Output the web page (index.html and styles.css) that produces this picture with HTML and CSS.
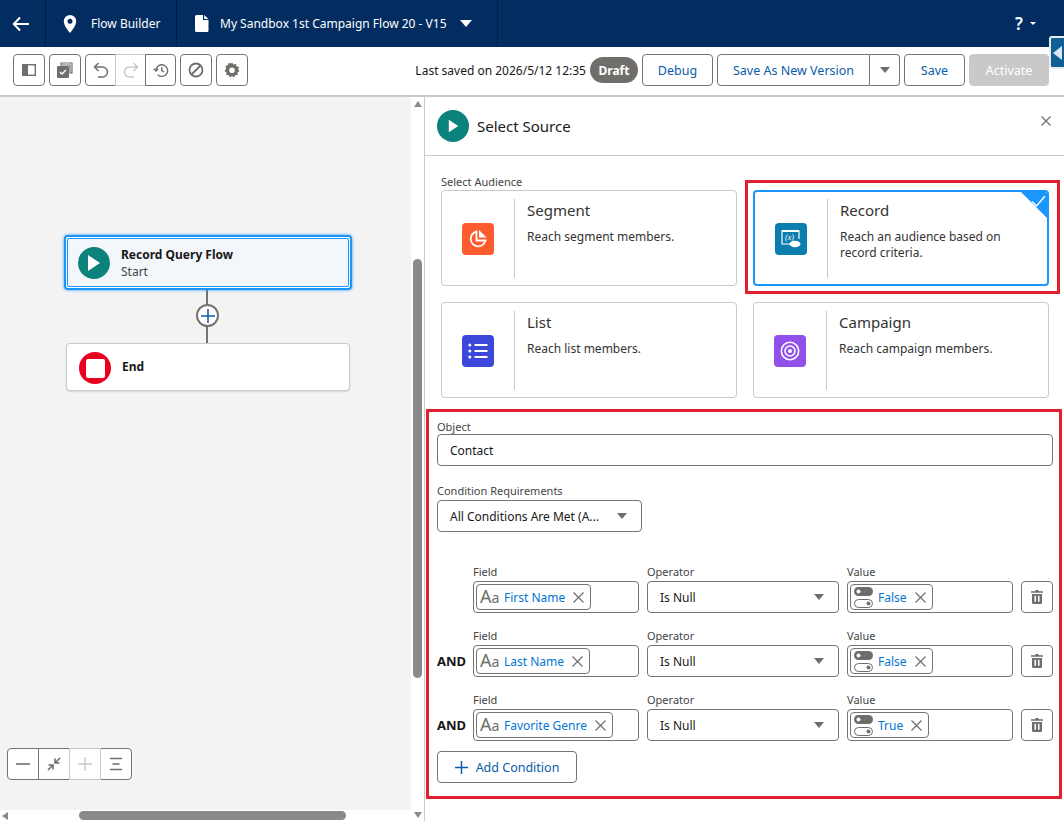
FILE: index.html
```html
<!DOCTYPE html>
<html lang="en">

<head>
  <meta charset="UTF-8" />
  <title>Flow Builder</title>
  <link rel="stylesheet" href="styles.css">
</head>

<body>
  <header class="topbar">
    <div class="top-back">
      <svg width="18" height="18" viewBox="0 0 18 18"><path d="M8 2.5 1.8 9 8 15.500M2 9h15" fill="none" stroke="#fff" stroke-width="2"/></svg>
    </div>
    <div class="top-app">
      <svg width="14" height="18" viewBox="0 0 14 18"><path fill-rule="evenodd" d="M7 0a6.200 6.200 0 0 0-6.200 6.200C.8 10.400 5 15.600 7 18c2-2.400 6.200-7.600 6.200-11.800A6.200 6.200 0 0 0 7 0Zm0 8.700a2.500 2.500 0 1 1 0-5 2.500 2.500 0 0 1 0 5Z" fill="#fff"/></svg>
      <span>Flow Builder</span>
    </div>
    <div class="top-flow">
      <svg width="14" height="17" viewBox="0 0 14 17"><path d="M1.500 0H8v5h5.500v10.500a1.500 1.500 0 0 1-1.500 1.500H1.500A1.500 1.500 0 0 1 0 15.500v-14A1.500 1.500 0 0 1 1.500 0ZM9.200 0l4.300 3.900H9.200Z" fill="#fff"/></svg>
      <span>My Sandbox 1st Campaign Flow 20 - V15</span>
      <i class="caret-white"></i>
    </div>
    <div class="top-help"><b>?</b><i class="caret-small"></i></div>
  </header>

  <div class="side-tab"><i></i></div>

  <section class="toolbar">
    <button class="tool">
      <svg width="14" height="12" viewBox="0 0 14 12"><rect x=".7" y=".7" width="12.600" height="10.600" fill="none" stroke="#706e6b" stroke-width="1.400"/><rect x="1" y="1" width="5" height="10" fill="#706e6b"/></svg>
    </button>
    <button class="tool">
      <svg width="16" height="16" viewBox="0 0 16 16"><path d="M4 3V1h11v10h-2V3Z" fill="none" stroke="#706e6b" stroke-width="1.200"/><rect y="4" width="12" height="12" rx="1" fill="#706e6b"/><path d="m3 10 2 2 4-4" fill="none" stroke="#fff" stroke-width="1.300"/></svg>
    </button>
    <div class="tool-group">
      <button class="tool">
        <svg width="16" height="16" viewBox="0 0 16 16"><path d="M5.500 1 1.500 5l4 4M2 5h7.500a4.500 4.500 0 0 1 0 10H5" fill="none" stroke="#706e6b" stroke-width="1.500"/></svg>
      </button>
      <button class="tool off">
        <svg width="16" height="16" viewBox="0 0 16 16"><path d="m10.500 1 4 4-4 4M14 5H6.500a4.500 4.500 0 0 0 0 10H11" fill="none" stroke="#c9c9c9" stroke-width="1.500"/></svg>
      </button>
      <button class="tool">
        <svg width="16" height="16" viewBox="0 0 16 16"><path d="M3 8.500a5.800 5.800 0 1 1 1.700 4.200M.8 6.800 3 9l2.200-2.200M8.800 5v3.500l2.300 1.500" fill="none" stroke="#706e6b" stroke-width="1.400"/></svg>
      </button>
    </div>
    <button class="tool">
      <svg width="16" height="16" viewBox="0 0 16 16"><circle cx="8" cy="8" r="6.500" fill="none" stroke="#706e6b" stroke-width="1.800"/><path d="m3.500 12.500 9-9" stroke="#706e6b" stroke-width="1.800"/></svg>
    </button>
    <button class="tool">
      <svg width="16" height="16" viewBox="0 0 16 16"><path fill-rule="evenodd" d="M8 .5l1.500 2 2.400-.6.600 2.400 2.500.8-.8 2.400L15.500 9l-2 1.400.2 2.500-2.500.3L10 15.500 8 14l-2 1.500-1.200-2.300-2.500-.3.200-2.500L.5 9l1.700-2.500-.8-2.400 2.500-.8.600-2.400 2.400.6ZM8 5.500a2.800 2.800 0 1 0 0 5.600 2.800 2.800 0 0 0 0-5.600Z" fill="#706e6b"/></svg>
    </button>
    <span class="saved">Last saved on 2026/5/12 12:35</span>
    <span class="draft">Draft</span>
    <button class="btn btn-debug">Debug</button>
    <div class="split">
      <button class="btn split-main">Save As New Version</button>
      <button class="btn split-arrow"><i class="caret-grey"></i></button>
    </div>
    <button class="btn btn-save">Save</button>
    <button class="btn btn-activate">Activate</button>
  </section>

  <main class="work">
    <div class="left">
      <div class="canvas">
        <div class="node node-start">
          <div class="node-inner">
            <span class="round teal">
              <svg width="14" height="18" viewBox="0 0 14 18"><path d="M1 1v16l12-8Z" fill="#fff"/></svg>
            </span>
            <div>
              <div class="node-title">Record Query Flow</div>
              <div class="node-sub">Start</div>
            </div>
          </div>
        </div>
        <div class="connector"></div>
        <div class="add-node">
          <svg width="14" height="14" viewBox="0 0 14 14"><path d="M7 0v14M0 7h14" stroke="#0b5cab" stroke-width="1.500"/></svg>
        </div>
        <div class="node node-end">
          <span class="round red"><i class="stop"></i></span>
          <div class="node-title">End</div>
        </div>
        <div class="zoom-bar">
          <button class="zoom-btn"><svg width="14" height="14" viewBox="0 0 14 14"><path d="M0 7h14" stroke="#706e6b" stroke-width="1.600"/></svg></button>
          <button class="zoom-btn"><svg width="14" height="14" viewBox="0 0 14 14"><path d="M8 6l5-5M8 1.500V6h4.500M6 8l-5 5M1.500 8H6v4.500" fill="none" stroke="#706e6b" stroke-width="1.600"/></svg></button>
          <button class="zoom-btn off"><svg width="14" height="14" viewBox="0 0 14 14"><path d="M7 0v14M0 7h14" stroke="#c9c9c9" stroke-width="1.400"/></svg></button>
          <button class="zoom-btn"><svg width="14" height="14" viewBox="0 0 14 14"><path d="M1 1.500h12M3.500 7h7M1 12.500h12" stroke="#706e6b" stroke-width="1.600"/></svg></button>
        </div>
      </div>
      <div class="hscroll">
        <i class="arrow-left"></i>
        <div class="hthumb"></div>
      </div>
    </div>

    <div class="vscroll">
      <i class="arrow-up"></i>
      <div class="vthumb"></div>
      <i class="arrow-down"></i>
    </div>

    <aside class="panel">
      <div class="panel-head">
        <span class="round teal">
          <svg width="11" height="14" viewBox="0 0 14 18"><path d="M1 1v16l12-8Z" fill="#fff"/></svg>
        </span>
        <h1>Select Source</h1>
        <svg class="panel-close" width="10" height="10" viewBox="0 0 10 10"><path d="M.5.5l9 9M9.500.5l-9 9" stroke="#706e6b" stroke-width="1.200"/></svg>
      </div>

      <div class="audience">
        <div class="field-label">Select Audience</div>
        <div class="cards">
          <div class="card">
            <div class="card-icon"><span class="tile orange">
              <svg width="20" height="20" viewBox="0 0 20 20"><path d="M8.500 2.500a7.500 7.500 0 1 0 9 9h-9Z" fill="none" stroke="#fff" stroke-width="1.800"/><path d="M11 1v7.500h7.500Z" fill="#fff"/></svg>
            </span></div>
            <div class="card-text">
              <div class="card-title">Segment</div>
              <p>Reach segment members.</p>
            </div>
          </div>
          <div class="card selected">
            <div class="card-icon"><span class="tile blue">
              <svg width="22" height="22" viewBox="0 0 22 22"><path d="M10 16H2V3h17v8" fill="none" stroke="#fff" stroke-width="1.200"/><path d="M2 3h17" stroke="#fff" stroke-width="2"/><text x="5" y="12" class="tile-x">(x)</text><ellipse cx="15" cy="16" rx="5.500" ry="3.200" fill="#fff"/></svg>
            </span></div>
            <div class="card-text">
              <div class="card-title">Record</div>
              <p>Reach an audience based on record criteria.</p>
            </div>
            <span class="corner"></span>
            <svg class="corner-check" width="15" height="12" viewBox="0 0 15 12"><path d="M1 6.500 5.500 11 14 1" fill="none" stroke="#fff" stroke-width="1.400"/></svg>
          </div>
          <div class="card">
            <div class="card-icon"><span class="tile indigo">
              <svg width="20" height="20" viewBox="0 0 20 20"><path d="M6.500 4h13M6.500 10h13M6.500 16h13" stroke="#fff" stroke-width="2"/><circle cx="1.800" cy="4" r="1.500" fill="#fff"/><circle cx="1.800" cy="10" r="1.500" fill="#fff"/><circle cx="1.800" cy="16" r="1.500" fill="#fff"/></svg>
            </span></div>
            <div class="card-text">
              <div class="card-title">List</div>
              <p>Reach list members.</p>
            </div>
          </div>
          <div class="card">
            <div class="card-icon"><span class="tile purple">
              <svg width="20" height="20" viewBox="0 0 20 20"><circle cx="10" cy="10" r="8.700" fill="none" stroke="#fff" stroke-width="1.600"/><circle cx="10" cy="10" r="5" fill="none" stroke="#fff" stroke-width="1.600"/><circle cx="10" cy="10" r="2" fill="#fff"/></svg>
            </span></div>
            <div class="card-text">
              <div class="card-title">Campaign</div>
              <p>Reach campaign members.</p>
            </div>
          </div>
        </div>
      </div>

      <div class="criteria">
        <div class="field-label">Object</div>
        <div class="input">Contact</div>
        <div class="field-label req-label">Condition Requirements</div>
        <div class="input select req-select">All Conditions Are Met (A...<i class="caret-grey"></i></div>

        <div class="cond-row">
          <span class="and"></span>
          <div class="col-field">
            <div class="field-label">Field</div>
            <div class="input pill-box">
              <span class="pill"><span class="type-aa">A<small>a</small></span><a>First Name</a><svg class="pill-x" width="11" height="11" viewBox="0 0 11 11"><path d="M.5.5l10 10M10.500.5l-10 10" stroke="#706e6b" stroke-width="1.200"/></svg></span>
            </div>
          </div>
          <div class="col-op">
            <div class="field-label">Operator</div>
            <div class="input select">Is Null<i class="caret-grey"></i></div>
          </div>
          <div class="col-field">
            <div class="field-label">Value</div>
            <div class="input pill-box">
              <span class="pill"><svg class="toggle" width="20" height="23" viewBox="0 0 20 23"><rect y="1" width="19" height="9" rx="4.500" fill="#706e6b"/><circle cx="4.500" cy="5.500" r="2" fill="#fff"/><rect x=".5" y="13.500" width="18" height="8" rx="4" fill="none" stroke="#706e6b"/><circle cx="14.500" cy="17.500" r="2" fill="#706e6b"/></svg><a>False</a><svg class="pill-x" width="11" height="11" viewBox="0 0 11 11"><path d="M.5.5l10 10M10.500.5l-10 10" stroke="#706e6b" stroke-width="1.200"/></svg></span>
            </div>
          </div>
          <button class="trash"><svg width="12" height="14" viewBox="0 0 12 14"><path fill-rule="evenodd" d="M4.500 0h3v1.200H12v1.600H0V1.200h4.500ZM1 4h10v8.500a1.500 1.500 0 0 1-1.500 1.500h-7A1.500 1.500 0 0 1 1 12.500Zm2.500 1.800v6h1.500v-6Zm3.500 0v6h1.500v-6Z" fill="#706e6b"/></svg></button>
        </div>

        <div class="cond-row">
          <span class="and">AND</span>
          <div class="col-field">
            <div class="field-label">Field</div>
            <div class="input pill-box">
              <span class="pill"><span class="type-aa">A<small>a</small></span><a>Last Name</a><svg class="pill-x" width="11" height="11" viewBox="0 0 11 11"><path d="M.5.5l10 10M10.500.5l-10 10" stroke="#706e6b" stroke-width="1.200"/></svg></span>
            </div>
          </div>
          <div class="col-op">
            <div class="field-label">Operator</div>
            <div class="input select">Is Null<i class="caret-grey"></i></div>
          </div>
          <div class="col-field">
            <div class="field-label">Value</div>
            <div class="input pill-box">
              <span class="pill"><svg class="toggle" width="20" height="23" viewBox="0 0 20 23"><rect y="1" width="19" height="9" rx="4.500" fill="#706e6b"/><circle cx="4.500" cy="5.500" r="2" fill="#fff"/><rect x=".5" y="13.500" width="18" height="8" rx="4" fill="none" stroke="#706e6b"/><circle cx="14.500" cy="17.500" r="2" fill="#706e6b"/></svg><a>False</a><svg class="pill-x" width="11" height="11" viewBox="0 0 11 11"><path d="M.5.5l10 10M10.500.5l-10 10" stroke="#706e6b" stroke-width="1.200"/></svg></span>
            </div>
          </div>
          <button class="trash"><svg width="12" height="14" viewBox="0 0 12 14"><path fill-rule="evenodd" d="M4.500 0h3v1.200H12v1.600H0V1.200h4.500ZM1 4h10v8.500a1.500 1.500 0 0 1-1.500 1.500h-7A1.500 1.500 0 0 1 1 12.500Zm2.500 1.800v6h1.500v-6Zm3.500 0v6h1.500v-6Z" fill="#706e6b"/></svg></button>
        </div>

        <div class="cond-row">
          <span class="and">AND</span>
          <div class="col-field">
            <div class="field-label">Field</div>
            <div class="input pill-box">
              <span class="pill"><span class="type-aa">A<small>a</small></span><a>Favorite Genre</a><svg class="pill-x" width="11" height="11" viewBox="0 0 11 11"><path d="M.5.5l10 10M10.500.5l-10 10" stroke="#706e6b" stroke-width="1.200"/></svg></span>
            </div>
          </div>
          <div class="col-op">
            <div class="field-label">Operator</div>
            <div class="input select">Is Null<i class="caret-grey"></i></div>
          </div>
          <div class="col-field">
            <div class="field-label">Value</div>
            <div class="input pill-box">
              <span class="pill"><svg class="toggle" width="20" height="23" viewBox="0 0 20 23"><rect y="1" width="19" height="9" rx="4.500" fill="#706e6b"/><circle cx="4.500" cy="5.500" r="2" fill="#fff"/><rect x=".5" y="13.500" width="18" height="8" rx="4" fill="none" stroke="#706e6b"/><circle cx="14.500" cy="17.500" r="2" fill="#706e6b"/></svg><a>True</a><svg class="pill-x" width="11" height="11" viewBox="0 0 11 11"><path d="M.5.5l10 10M10.500.5l-10 10" stroke="#706e6b" stroke-width="1.200"/></svg></span>
            </div>
          </div>
          <button class="trash"><svg width="12" height="14" viewBox="0 0 12 14"><path fill-rule="evenodd" d="M4.500 0h3v1.200H12v1.600H0V1.200h4.500ZM1 4h10v8.500a1.500 1.500 0 0 1-1.500 1.500h-7A1.500 1.500 0 0 1 1 12.500Zm2.500 1.800v6h1.500v-6Zm3.500 0v6h1.500v-6Z" fill="#706e6b"/></svg></button>
        </div>

        <button class="btn add-cond">
          <svg width="13" height="13" viewBox="0 0 13 13"><path d="M6.500 0v13M0 6.500h13" stroke="#0b5cab" stroke-width="1.500"/></svg>
          Add Condition
        </button>
      </div>

      <div class="mark mark-card"></div>
      <div class="mark mark-form"></div>
    </aside>
  </main>
</body>

</html>
```

FILE: styles.css
```css
* {
  margin: 0;
  padding: 0;
  box-sizing: border-box;
}

html,
body {
  height: 821px;
  overflow: hidden;
}

body {
  font-family: "Noto Sans", "Open Sans", sans-serif;
  font-size: 12px;
  color: #181818;
  background: #fff;
  display: flex;
  flex-direction: column;
  position: relative;
}

button {
  font-family: inherit;
  background: #fff;
  cursor: pointer;
}

/* top bar */
.topbar {
  height: 47px;
  background: #032d60;
  color: #fff;
  display: flex;
  align-items: stretch;
  flex-shrink: 0;
}

.top-back,
.top-app,
.top-flow {
  display: flex;
  align-items: center;
  border-right: 1px solid #021c3d;
}

.top-back {
  width: 46px;
  padding-left: 12px;
}

.top-app {
  width: 131px;
  padding-left: 17px;
  gap: 14px;
}

.top-flow {
  width: 321px;
  padding-left: 18px;
  gap: 11px;
}

.caret-white {
  width: 0;
  height: 0;
  border-left: 6px solid transparent;
  border-right: 6px solid transparent;
  border-top: 7px solid #fff;
  margin-left: 2px;
}

.top-help {
  margin-left: auto;
  width: 49px;
  display: flex;
  align-items: center;
  gap: 7px;
}

.top-help b {
  font-size: 17px;
  font-weight: 600;
}

.caret-small {
  width: 0;
  height: 0;
  border-left: 3px solid transparent;
  border-right: 3px solid transparent;
  border-top: 3px solid #fff;
}

.side-tab {
  position: absolute;
  top: 36px;
  right: 0;
  width: 15px;
  height: 33px;
  background: #0f5f94;
  border: 2px solid #e6ecf2;
  border-right: 0;
  border-radius: 3px 0 0 3px;
  display: flex;
  align-items: center;
  z-index: 3;
}

.side-tab i {
  width: 0;
  height: 0;
  border-top: 7px solid transparent;
  border-bottom: 7px solid transparent;
  border-right: 9px solid #dbe7f0;
  margin-left: 2px;
}

/* toolbar */
.toolbar {
  height: 50px;
  flex-shrink: 0;
  display: flex;
  align-items: center;
  padding: 0 15px 2px 13px;
  gap: 4px;
  border-bottom: 2px solid #c9c9c9;
}

.tool {
  width: 32px;
  height: 32px;
  border: 1px solid #747474;
  border-radius: 4px;
  display: flex;
  align-items: center;
  justify-content: center;
}

.tool-group {
  display: flex;
}

.tool-group .tool {
  width: 31px;
  border-radius: 0;
  margin-left: -1px;
}

.tool-group .tool:first-child {
  margin-left: 0;
  border-radius: 4px 0 0 4px;
}

.tool-group .tool:last-child {
  border-radius: 0 4px 4px 0;
}

.tool.off {
  border-color: #c9c9c9;
  border-right: 0;
  border-left-color: #c9c9c9;
}

.saved {
  margin-left: auto;
  font-size: 12px;
  white-space: nowrap;
}

.draft {
  background: #706e6b;
  color: #fff;
  font-weight: 700;
  font-size: 12px;
  height: 26px;
  width: 48px;
  border-radius: 13px;
  display: flex;
  align-items: center;
  justify-content: center;
  margin-right: 0;
}

.btn {
  height: 32px;
  border: 1px solid #747474;
  border-radius: 4px;
  color: #0b5cab;
  font-size: 12.500px;
}

.btn-debug {
  width: 71px;
}

.split {
  display: flex;
}

.split-main {
  width: 153px;
  border-radius: 4px 0 0 4px;
}

.split-arrow {
  width: 30px;
  border-left: 0;
  border-radius: 0 4px 4px 0;
  display: flex;
  align-items: center;
  justify-content: center;
}

.caret-grey {
  width: 0;
  height: 0;
  border-left: 5px solid transparent;
  border-right: 5px solid transparent;
  border-top: 6px solid #706e6b;
}

.btn-save {
  width: 61px;
}

.btn-activate {
  width: 80px;
  background: #c9c9c9;
  border-color: #c9c9c9;
  color: #fff;
}

/* main area */
.work {
  flex: 1;
  display: flex;
  min-height: 0;
}

.left {
  width: 411px;
  display: flex;
  flex-direction: column;
}

.canvas {
  flex: 1;
  background: #f3f3f3;
  position: relative;
}

.node {
  position: absolute;
  background: #fff;
  border-radius: 4px;
}

.node-start {
  left: 64px;
  top: 138px;
  width: 288px;
  height: 55px;
  border: 2px solid #1b96ff;
  padding: 1px;
  box-shadow: 0 0 3px #1b96ff;
  background: #fff;
}

.node-inner {
  height: 100%;
  background: #f3f6fb;
  border: 1px solid #1b96ff;
  border-radius: 2px;
  display: flex;
  align-items: center;
  padding-left: 10px;
  gap: 11px;
}

.node-end {
  left: 66px;
  top: 246px;
  width: 284px;
  height: 48px;
  border: 1px solid #c9c9c9;
  box-shadow: 0 1px 2px rgba(0, 0, 0, .12);
  display: flex;
  align-items: flex-start;
  padding: 8px 0 0 12px;
  gap: 11px;
}

.node-end .node-title {
  margin-top: 6px;
}

.round {
  width: 32px;
  height: 32px;
  border-radius: 50%;
  display: flex;
  align-items: center;
  justify-content: center;
  flex-shrink: 0;
}

.teal {
  background: #0b827c;
}

.red {
  background: #ea001e;
}

.stop {
  width: 19px;
  height: 19px;
  background: #fff;
  border-radius: 2px;
}

.node-title {
  font-size: 12px;
  font-weight: 700;
  line-height: 17px;
}

.node-sub {
  font-size: 12px;
  color: #444;
  line-height: 17px;
}

.connector {
  position: absolute;
  left: 206px;
  top: 193px;
  width: 2px;
  height: 53px;
  background: #747474;
}

.add-node {
  position: absolute;
  left: 196px;
  top: 207px;
  width: 23px;
  height: 23px;
  border: 2px solid #747474;
  border-radius: 50%;
  background: #fff;
  display: flex;
  align-items: center;
  justify-content: center;
}

.zoom-bar {
  position: absolute;
  left: 7px;
  top: 651px;
  display: flex;
}

.zoom-btn {
  width: 32px;
  height: 32px;
  margin-left: -1px;
  border: 1px solid #747474;
  display: flex;
  align-items: center;
  justify-content: center;
}

.zoom-btn:first-child {
  margin-left: 0;
  border-radius: 4px 0 0 4px;
}

.zoom-btn:last-child {
  border-radius: 0 4px 4px 0;
}

.zoom-btn.off {
  border-top-color: #c9c9c9;
  border-bottom-color: #c9c9c9;
  border-left-color: #c9c9c9;
  border-right-color: #c9c9c9;
  position: relative;
}

.hscroll {
  height: 11px;
  flex-shrink: 0;
  background: #fff;
  display: flex;
  align-items: center;
  padding-left: 2px;
}

.arrow-left {
  width: 0;
  height: 0;
  border-top: 4px solid transparent;
  border-bottom: 4px solid transparent;
  border-right: 6px solid #8a8a8a;
}

.hthumb {
  width: 267px;
  height: 9px;
  margin-left: 71px;
  border-radius: 5px;
  background: #8a8a8a;
}

.vscroll {
  width: 13px;
  flex-shrink: 0;
  background: #fff;
  display: flex;
  flex-direction: column;
  align-items: center;
  padding: 4px 0 3px;
}

.arrow-up,
.arrow-down {
  width: 0;
  height: 0;
  border-left: 4px solid transparent;
  border-right: 4px solid transparent;
}

.arrow-up {
  border-bottom: 6px solid #8a8a8a;
}

.arrow-down {
  border-top: 6px solid #8a8a8a;
  margin-top: auto;
}

.vthumb {
  width: 9px;
  height: 419px;
  margin-top: 152px;
  border-radius: 5px;
  background: #8a8a8a;
}

/* right panel */
.panel {
  flex: 1;
  border-left: 1px solid #c9c9c9;
  position: relative;
  min-width: 0;
}

.panel-head {
  height: 59px;
  display: flex;
  align-items: center;
  padding-left: 12px;
  gap: 8px;
  border-bottom: 1px solid #c9c9c9;
  position: relative;
}

.panel-head h1 {
  font-size: 15px;
  font-weight: 400;
}

.panel-close {
  position: absolute;
  right: 13px;
  top: 19px;
}

.audience {
  padding: 18px 15px 0 16px;
}

.field-label {
  font-size: 11px;
  line-height: 15px;
  color: #444;
}

.cards {
  display: grid;
  grid-template-columns: 296px 296px;
  grid-auto-rows: 96px;
  gap: 16px;
  margin-top: 1px;
}

.card {
  border: 1px solid #c9c9c9;
  border-radius: 4px;
  display: flex;
  padding: 8px 0;
  position: relative;
  overflow: hidden;
}

.card.selected {
  border: 2px solid #1b96ff;
  padding: 7px 0;
}

.card-icon {
  width: 73px;
  border-right: 1px solid #c9c9c9;
  display: flex;
  align-items: center;
  justify-content: center;
  flex-shrink: 0;
  height: 79px;
}

.tile {
  width: 32px;
  height: 32px;
  border-radius: 4px;
  display: flex;
  align-items: center;
  justify-content: center;
}

.orange {
  background: #fe5c2f;
}

.blue {
  background: #0b7ead;
}

.indigo {
  background: #3a49da;
}

.purple {
  background: #9050e9;
}

.tile-x {
  font-family: "Liberation Serif", serif;
  font-size: 8px;
  font-style: italic;
  fill: #fff;
}

.card-text {
  padding-left: 12px;
  padding-right: 30px;
}

.card-title {
  font-size: 15px;
  line-height: 22px;
  color: #333;
}

.card p {
  font-size: 12px;
  line-height: 16px;
  margin-top: 8px;
  color: #333;
}

.corner {
  position: absolute;
  top: -2px;
  right: -2px;
  width: 0;
  height: 0;
  border-top: 30px solid #1b96ff;
  border-left: 30px solid transparent;
}

.corner-check {
  position: absolute;
  top: 3px;
  right: 1px;
}

.criteria {
  padding: 21px 11px 0 12px;
}

.input {
  height: 32px;
  border: 1px solid #747474;
  border-radius: 4px;
  background: #fff;
  font-size: 12px;
  display: flex;
  align-items: center;
  padding-left: 12px;
}

.select {
  justify-content: space-between;
  padding-right: 14px;
}

.req-label {
  margin-top: 17px;
}

.req-select {
  width: 205px;
  margin-top: 2px;
}

.cond-row {
  display: flex;
  align-items: flex-end;
  gap: 8px;
  margin-top: 32px;
}

.cond-row + .cond-row {
  margin-top: 15px;
}

.and {
  width: 28px;
  font-size: 13px;
  font-weight: 700;
  line-height: 32px;
  flex-shrink: 0;
}

.col-field {
  width: 166px;
}

.col-op {
  width: 192px;
}

.col-field .field-label,
.col-op .field-label {
  margin-bottom: 2px;
}

.pill-box {
  padding-left: 2px;
}

.pill {
  height: 26px;
  border: 1px solid #747474;
  border-radius: 4px;
  display: flex;
  align-items: center;
  padding: 0 6px 0 3px;
  gap: 4px;
}

.pill a {
  color: #0176d3;
  white-space: nowrap;
}

.pill-x {
  margin-left: 4px;
}

.type-aa {
  font-size: 18px;
  color: #706e6b;
  line-height: 22px;
  width: 20px;
  display: flex;
  align-items: baseline;
}

.type-aa small {
  font-size: 14px;
}

.trash {
  width: 32px;
  height: 32px;
  border: 1px solid #747474;
  border-radius: 4px;
  display: flex;
  align-items: center;
  justify-content: center;
}

.add-cond {
  width: 140px;
  margin-top: 10px;
  display: flex;
  align-items: center;
  justify-content: center;
  gap: 8px;
}

.mark {
  position: absolute;
  border: 3px solid #e0202e;
  pointer-events: none;
}

.mark-card {
  left: 320px;
  top: 83px;
  width: 315px;
  height: 114px;
}

.mark-form {
  left: 1px;
  top: 312px;
  width: 636px;
  height: 390px;
}
```
